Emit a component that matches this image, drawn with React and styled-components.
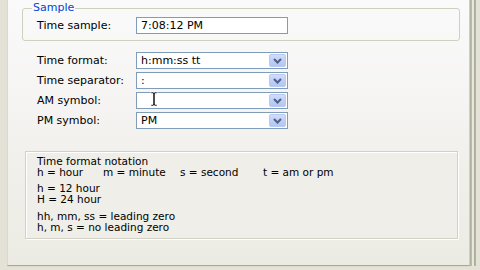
import React from 'react';
import styled, { createGlobalStyle } from 'styled-components';

const Global = createGlobalStyle`
  html, body { margin: 0; padding: 0; }
  body {
    width: 480px;
    height: 270px;
    overflow: hidden;
    background: #E4E2D6;
    font-family: "DejaVu Sans", Tahoma, sans-serif;
    font-size: 11px;
    color: #000;
  }
`;

const Page = styled.div`
  box-sizing: border-box;
  margin-left: 7px;
  width: 463px;
  height: 266px;
  padding: 2px 0 0 14px;
  border-left: 1px solid #D9D7CE;
  border-right: 1px solid #CFCFC7;
  border-bottom: 1px solid #A9A797;
  background: linear-gradient(180deg, #FAFAFA 0%, #F6F5F4 35%, #F0EFEA 65%, #ECEBE3 100%);
  box-shadow: 1px 0 0 #AEB29E, 2px 0 0 #B9BCA9, 3px 0 0 #E9E8DD, 4px 0 0 #E9E8DD,
    5px 0 0 #ACAB9B, 6px 0 0 #B5B4A4, 0 1px 0 #DCDACB;
`;

const Group = styled.fieldset`
  box-sizing: border-box;
  width: 438px;
  margin: 0;
  padding: 3px 14px 6px 14px;
  border: 1px solid #D0D0BF;
  border-radius: 3px;
  min-inline-size: 0;
`;

const Legend = styled.legend`
  margin-left: -5px;
  padding: 0 1px;
  color: #0046D5;
  font-size: 11px;
  line-height: 12px;
`;

const FormGrid = styled.div`
  display: grid;
  grid-template-columns: ${p => p.$label}px 152px;
  row-gap: 3px;
  align-items: center;
  margin: ${p => p.$top}px 0 0 ${p => p.$left}px;
`;

const Label = styled.div`
  line-height: 13px;
  white-space: nowrap;
`;

const TextBox = styled.div`
  box-sizing: border-box;
  height: 17px;
  border: 1px solid #7F9DB9;
  background: #fff;
  padding-left: 4px;
  line-height: 15px;
  white-space: nowrap;
`;

const Combo = styled.div`
  position: relative;
  box-sizing: border-box;
  height: 17px;
  border: 1px solid #7F9DB9;
  background: #fff;
  display: flex;
  align-items: stretch;
`;

const ComboValue = styled.div`
  flex: 1;
  padding-left: 4px;
  line-height: 15px;
  white-space: nowrap;
  overflow: hidden;
`;

const DropButton = styled.div`
  box-sizing: border-box;
  width: 17px;
  margin: 1px 1px 1px 0;
  border: 1px solid #B8C9F2;
  border-radius: 2px;
  background: linear-gradient(180deg, #D0DCFA 0%, #BFCFF7 50%, #B3C6F3 100%);
  display: flex;
  align-items: center;
  justify-content: center;
`;

const Cursor = styled.svg`
  position: absolute;
  left: 13px;
  top: -2px;
`;

const NoteBox = styled.div`
  box-sizing: border-box;
  width: 433px;
  height: 88px;
  margin: 22px 0 0 3px;
  padding: 4px 11px;
  border: 1px solid #D2D1C6;
  box-shadow: 1px 1px 0 #FFFFFF, inset 1px 1px 0 #FFFFFF;
  background: #EFEEE8;
  font-size: 10.5px;
`;

const Line = styled.div`
  line-height: 11px;
  margin-top: ${p => p.$gap || 0}px;
  white-space: nowrap;
`;

const Cols = styled.div`
  display: grid;
  grid-template-columns: 66px 77px 83px auto;
  line-height: 11px;
  white-space: nowrap;
`;

const Chevron = () => (
  <svg width="9" height="6" viewBox="0 0 9 6">
    <polyline points="1,1 4.5,4.5 8,1" fill="none" stroke="#4D6185" strokeWidth="2" />
  </svg>
);

const ComboBox = ({ value, cursor }) => (
  <Combo>
    <ComboValue>{value}</ComboValue>
    <DropButton><Chevron /></DropButton>
    {cursor && (
      <Cursor width="8" height="16" viewBox="0 0 8 16">
        <path d="M1 1h2.5v0.5h1V1H7v1.5H5v11h2V15H4.5v-0.5h-1V15H1v-1.5h2v-11H1z" fill="#000" stroke="#fff" strokeWidth="0.6" />
      </Cursor>
    )}
  </Combo>
);

export default function App() {
  return (
    <>
      <Global />
      <Page>
        <Group>
          <Legend>Sample</Legend>
          <FormGrid $label={99} $top={0} $left={0}>
            <Label>Time sample:</Label>
            <TextBox>7:08:12 PM</TextBox>
          </FormGrid>
        </Group>
        <FormGrid $label={99} $top={11} $left={15}>
          <Label>Time format:</Label>
          <ComboBox value="h:mm:ss tt" />
          <Label>Time separator:</Label>
          <ComboBox value=":" />
          <Label>AM symbol:</Label>
          <ComboBox value="" cursor />
          <Label>PM symbol:</Label>
          <ComboBox value="PM" />
        </FormGrid>
        <NoteBox>
          <Line>Time format notation</Line>
          <Cols>
            <span>h = hour</span>
            <span>m = minute</span>
            <span>s = second</span>
            <span>t = am or pm</span>
          </Cols>
          <Line $gap={5}>h = 12 hour</Line>
          <Line>H = 24 hour</Line>
          <Line $gap={6}>hh, mm, ss = leading zero</Line>
          <Line>h, m, s = no leading zero</Line>
        </NoteBox>
      </Page>
    </>
  );
}
